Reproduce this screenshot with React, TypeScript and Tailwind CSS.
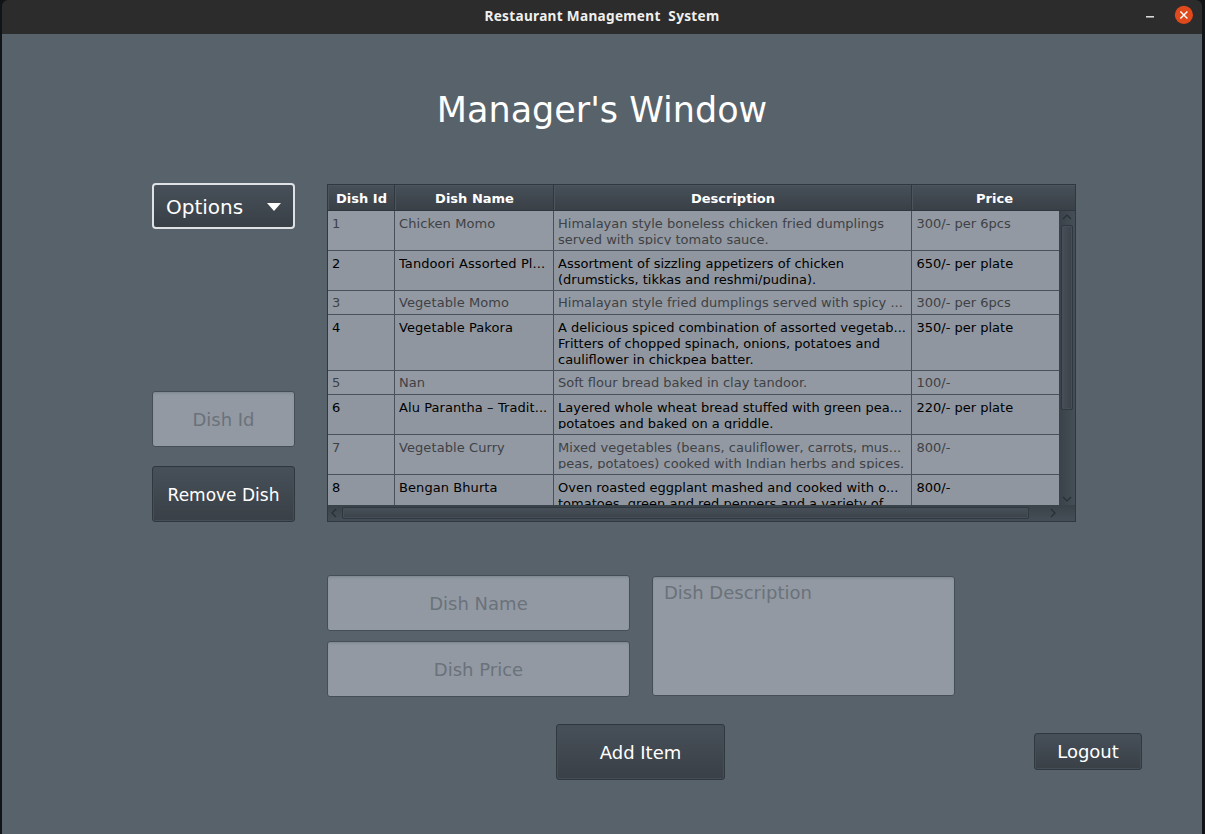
import type { ReactNode } from "react";

type Dish = { id: number; name: string; lines: string[]; price: string; height: string };

const dishes: Dish[] = [
  { id: 1, name: "Chicken Momo", lines: ["Himalayan style boneless chicken fried dumplings", "served with spicy tomato sauce."], price: "300/- per 6pcs", height: "h-10" },
  { id: 2, name: "Tandoori Assorted Pl...", lines: ["Assortment of sizzling appetizers of chicken", "(drumsticks, tikkas and reshmi/pudina)."], price: "650/- per plate", height: "h-10" },
  { id: 3, name: "Vegetable Momo", lines: ["Himalayan style fried dumplings served with spicy ..."], price: "300/- per 6pcs", height: "h-6" },
  { id: 4, name: "Vegetable Pakora", lines: ["A delicious spiced combination of assorted vegetab...", "Fritters of chopped spinach, onions, potatoes and", "cauliflower in chickpea batter."], price: "350/- per plate", height: "h-14" },
  { id: 5, name: "Nan", lines: ["Soft flour bread baked in clay tandoor."], price: "100/-", height: "h-6" },
  { id: 6, name: "Alu Parantha – Tradit...", lines: ["Layered whole wheat bread stuffed with green pea...", "potatoes and baked on a griddle."], price: "220/- per plate", height: "h-10" },
  { id: 7, name: "Vegetable Curry", lines: ["Mixed vegetables (beans, cauliflower, carrots, mus...", "peas, potatoes) cooked with Indian herbs and spices."], price: "800/-", height: "h-10" },
  { id: 8, name: "Bengan Bhurta", lines: ["Oven roasted eggplant mashed and cooked with o...", "tomatoes, green and red peppers and a variety of"], price: "800/-", height: "h-10" },
];

const columns = "grid grid-cols-[67px_159px_358px_1fr]";

function Button({ className, children }: { className: string; children: ReactNode }) {
  return (
    <button className={`flex shrink-0 items-center justify-center rounded-[3px] border border-[#2f373f] bg-linear-to-b from-[#474f59] to-[#394046] text-white shadow-[inset_0_0_0_1px_#454d56] ${className}`}>
      {children}
    </button>
  );
}

const field =
  "block shrink-0 rounded-[3px] border border-[#454e57] bg-[#9299a3] text-[18px] text-black shadow-[inset_0_2px_3px_-1px_#7b838c] outline-none placeholder:text-[#6a727a] placeholder:opacity-100";

function TitleBar() {
  return (
    <header className="flex h-[34px] shrink-0 items-start rounded-t-md bg-[#2c2c2c]">
      <div className="w-[120px]" />
      <h2 className="flex-1 whitespace-pre pt-[6px] text-center font-['Noto_Sans'] text-[13.6px] leading-5 font-bold tracking-[0.31px] text-[#f0f0ee]">
        Restaurant Management  System
      </h2>
      <div className="flex w-[120px] items-start justify-end pr-[9px] pt-[5px]">
        <svg className="mr-[20px] mt-[11px]" width="8" height="2" viewBox="0 0 8 2">
          <path d="M0 .8h8" stroke="#eee" strokeWidth="1.4" />
        </svg>
        <svg width="19" height="20" viewBox="0 0 19 20">
          <circle cx="9.9" cy="9.9" r="9.1" fill="#e0491b" />
          <path d="M6.4 6.4l7 7M13.4 6.4l-7 7" stroke="#fff" strokeWidth="1.4" />
        </svg>
      </div>
    </header>
  );
}

function Cell({ dish, children, last }: { dish: Dish; children: ReactNode; last?: boolean }) {
  const single = dish.lines.length === 1;
  return (
    <div className={`h-full overflow-hidden whitespace-pre border-b border-[#485059] ${last ? "pl-[4.5px]" : "border-r pl-1"} ${single ? "pt-1" : "pt-[5px] pb-[5px]"}`}>
      <div className="h-full overflow-hidden">{children}</div>
    </div>
  );
}

function DishTable() {
  return (
    <section className="flex h-[338px] w-[749px] flex-col border border-[#30383f] bg-[#434b53] text-[13px]">
      <div className={`${columns} h-[26px] shrink-0 border-b border-[#30383f] bg-linear-to-b from-[#474f59] to-[#394046] font-bold text-white`}>
        {["Dish Id", "Dish Name", "Description", "Price"].map((title, i) => (
          <div key={title} className={`flex items-center justify-center pt-[2px] shadow-[inset_1px_1px_0_#4c555e] ${i < 3 ? "border-r border-[#30383f] pl-px" : "pl-[2px]"}`}>
            {title}
          </div>
        ))}
      </div>
      <div className="flex min-h-0 flex-1">
        <div className="min-w-0 flex-1 overflow-hidden bg-[#9299a3] leading-4">
          {dishes.map((dish) => (
            <div key={dish.id} className={`${columns} ${dish.height} ${dish.id % 2 ? "text-[#3f4145]" : "bg-[#8f969f] text-black"}`}>
              <Cell dish={dish}>{dish.id}</Cell>
              <Cell dish={dish}><span className="tracking-[0.08px]">{dish.name}</span></Cell>
              <Cell dish={dish}>
                {dish.lines.map((line) => (
                  <div key={line}>{line}</div>
                ))}
              </Cell>
              <Cell dish={dish} last>{dish.price}</Cell>
            </div>
          ))}
        </div>
        <div className="flex w-4 flex-col items-center bg-linear-to-r from-[#3a4249] to-[#454d56] pt-[3px]">
          <svg width="10" height="6" viewBox="0 0 10 6" fill="none">
            <path d="M1 5l4-4 4 4" stroke="#272f37" strokeWidth="1.2" />
          </svg>
          <div className="mt-[5px] h-[185px] w-3 rounded-[2px] border border-[#2f373f] bg-linear-to-r from-[#474f59] to-[#3b4249] shadow-[inset_0_0_0_1px_#464e57]" />
          <svg className="mt-auto mb-[3px]" width="10" height="6" viewBox="0 0 10 6" fill="none">
            <path d="M1 1l4 4 4-4" stroke="#272f37" strokeWidth="1.2" />
          </svg>
        </div>
      </div>
      <div className="flex h-4 shrink-0 items-center bg-linear-to-b from-[#3a4249] to-[#454d56] pl-[3px] pr-[19px]">
        <svg width="6" height="10" viewBox="0 0 6 10" fill="none">
          <path d="M5 1L1 5l4 4" stroke="#272f37" strokeWidth="1.2" />
        </svg>
        <div className="ml-[5px] h-3 w-[687px] rounded-[2px] border border-[#2f373f] bg-linear-to-b from-[#474f59] to-[#3b4249] shadow-[inset_0_0_0_1px_#464e57]" />
        <svg className="ml-auto" width="6" height="10" viewBox="0 0 6 10" fill="none">
          <path d="M1 1l4 4-4 4" stroke="#272f37" strokeWidth="1.2" />
        </svg>
      </div>
    </section>
  );
}

export default function App() {
  return (
    <div className="h-[834px] w-[1205px] overflow-hidden bg-[#111416] pl-[2px] pr-[3px] font-['DejaVu_Sans',sans-serif]">
      <div className="flex h-full flex-col">
        <TitleBar />
        <main className="flex flex-1 flex-col bg-[#58626a]">
          <h1 className="mt-[53px] text-center text-[35px] leading-[46px] text-white">Manager's Window</h1>
          <div className="mt-[50px] flex pl-[150px]">
            <div className="flex w-[143px] flex-col">
              <button className="flex h-[46px] w-full items-center justify-between rounded-[4px] border-2 border-[#dfe2e5] bg-linear-to-b from-[#474f59] to-[#394046] pl-[12px] pr-[12px] pt-px text-[20px] text-white">
                Options
                <svg width="14" height="8" viewBox="0 0 14 8">
                  <path d="M0 0h14L7 8z" fill="#fff" />
                </svg>
              </button>
              <input placeholder="Dish Id" className={`${field} mt-[162px] h-14 w-[143px] pt-px text-center`} />
              <Button className="mt-[19px] h-14 w-[143px] pt-[4px] text-[17px]">Remove Dish</Button>
            </div>
            <div className="ml-8 mt-px">
              <DishTable />
            </div>
          </div>
          <div className="mt-[53px] flex pl-[325px]">
            <div className="flex flex-col gap-[10px]">
              <input placeholder="Dish Name" className={`${field} h-14 w-[303px] pt-px text-center`} />
              <input placeholder="Dish Price" className={`${field} h-14 w-[303px] pt-px text-center`} />
            </div>
            <textarea placeholder="Dish Description" className={`${field} ml-[22px] mt-px h-[120px] w-[303px] resize-none px-[11px] py-[4px] leading-6`} />
          </div>
          <div className="mt-[27px] flex pl-[554px]">
            <Button className="h-14 w-[169px] text-[18px]">Add Item</Button>
            <Button className="ml-[309px] mt-[9px] h-[37px] w-[108px] pb-px text-[18px]">Logout</Button>
          </div>
        </main>
      </div>
    </div>
  );
}
